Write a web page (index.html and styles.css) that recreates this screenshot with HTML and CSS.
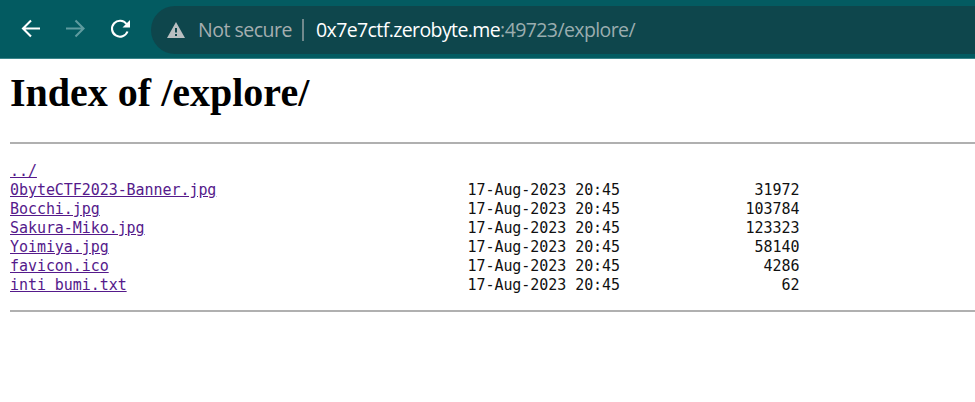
FILE: index.html
```html
<!DOCTYPE html>
<html lang="en">
<head>
<meta charset="utf-8">
<title>Index of /explore/</title>
<link rel="stylesheet" href="styles.css">
</head>
<body>
<header class="toolbar">
<svg class="nav" viewBox="0 0 130 58" width="130" height="58" fill="none" stroke-width="2.1">
<path stroke="#fff" d="M40 28.500H23M31 20.500L23 28.500L31 36.500"/>
<path stroke="#5f9b9f" d="M66 28.500H83.500M75.500 20.500L83.500 28.500L75.500 36.500"/>
<path stroke="#fff" d="M126.500 24A8 8 0 1 0 127.500 31.500"/>
<path fill="#fff" d="M130 20V27.500H122.500Z"/>
</svg>
<div class="address">
<svg class="warn" viewBox="0 0 18 16" width="18" height="16"><path fill="#b9bfc1" d="M9 0L18 16H0Z"/><path stroke="#0e464c" stroke-width="2" d="M9 6V10.500M9 12V14"/></svg>
<span class="status">Not secure</span><span class="divider"></span>
<span class="url"><b>0x7e7ctf.zerobyte.me</b><span class="path">:49723/explore/</span></span>
</div>
</header>
<main>
<h1>Index of /explore/</h1>
<hr>
<pre><a href="#">../</a>
<a href="#">0byteCTF2023-Banner.jpg</a>                            17-Aug-2023 20:45               31972
<a href="#">Bocchi.jpg</a>                                         17-Aug-2023 20:45              103784
<a href="#">Sakura-Miko.jpg</a>                                    17-Aug-2023 20:45              123323
<a href="#">Yoimiya.jpg</a>                                        17-Aug-2023 20:45               58140
<a href="#">favicon.ico</a>                                        17-Aug-2023 20:45                4286
<a href="#">inti bumi.txt</a>                                      17-Aug-2023 20:45                  62
</pre>
<hr>
</main>
</body>
</html>
```
FILE: styles.css
```css
body { margin: 0; background: #fff; overflow: hidden; }
.toolbar { height: 59px; box-sizing: border-box; border-bottom: 1px solid #3b858a; background: #035b61; display: flex; align-items: center; }
.nav { flex: none; }
.address { flex: 1; margin: 1px 0 0 21px; height: 48px; border-radius: 24px 0 0 24px; background: #0e464c; display: flex; align-items: center; padding-left: 16px; font: 19.500px "Open Sans", sans-serif; letter-spacing: -0.5px; color: #a5aeb0; white-space: nowrap; }
.status { margin-left: 13px; width: 94px; }
.divider { width: 2px; height: 22px; background: #71898c; margin: 0 12px 0 10px; }
.url { letter-spacing: -0.6px; }
.url b { color: #fff; font-weight: 400; }
.path { color: #9aadaf; }
main { padding-left: 10px; }
h1 { font: bold 40px/46px "Liberation Serif", serif; margin: 11px 0 26px; color: #000; }
hr { margin: 0; border: 0; height: 2px; background: #b0b0b0; }
pre { margin: 18px 0 15px; font: 15px/19px "DejaVu Sans Mono", monospace; letter-spacing: -0.06px; color: #111; }
a { color: #551a8b; }
```
